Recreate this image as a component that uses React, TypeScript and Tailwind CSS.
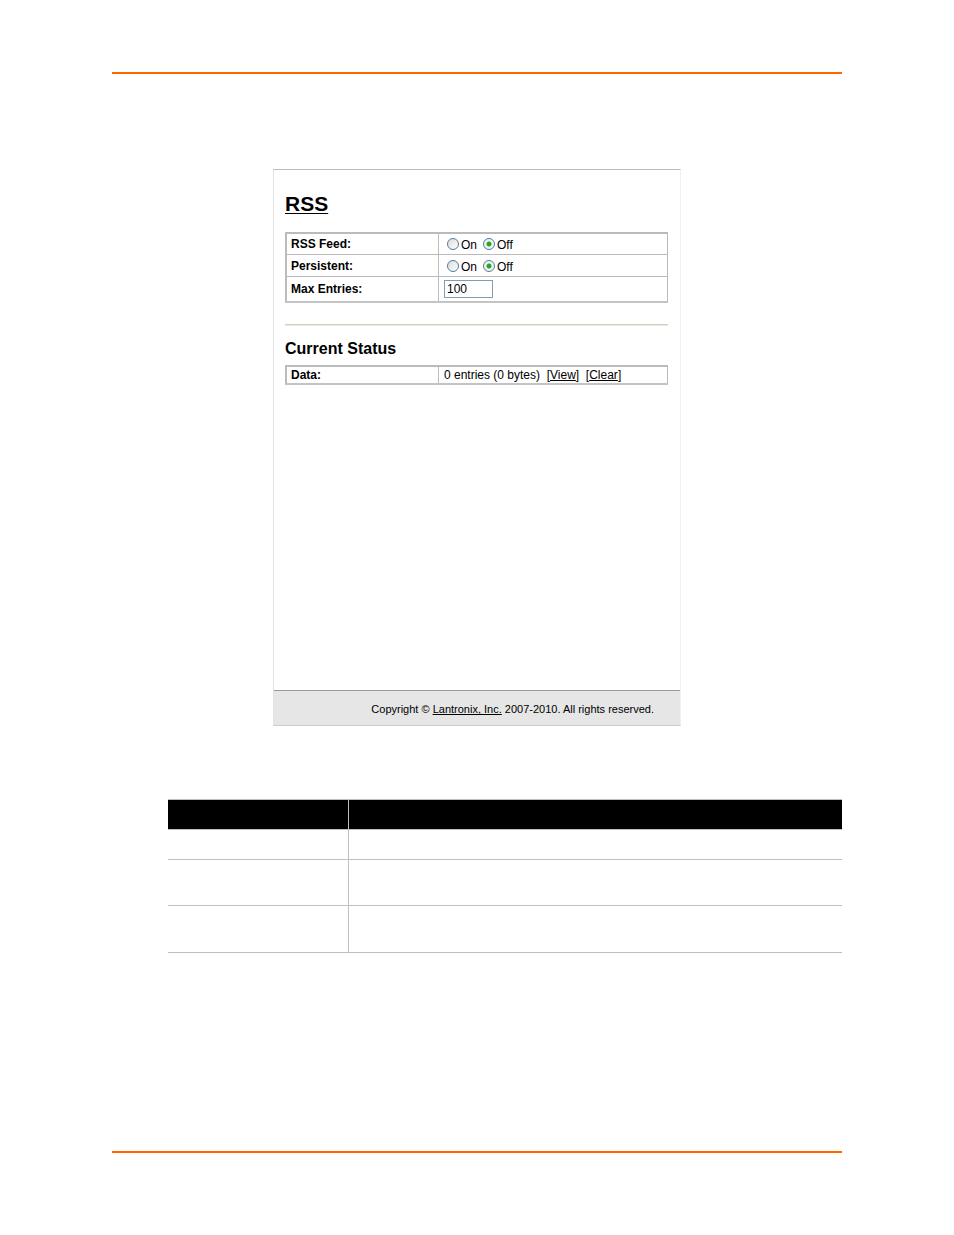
import { useState } from 'react';
import type { ReactNode } from 'react';

const manualRows = ['h-[30px]', 'h-[46px]', 'h-[47px]'];

interface RadioProps {
  name: string;
  label: string;
  checked: boolean;
  onChange: () => void;
}

function Radio({ name, label, checked, onChange }: RadioProps) {
  return (
    <label className="flex items-center gap-[2px]">
      <input
        type="radio"
        name={name}
        checked={checked}
        onChange={onChange}
        className="mb-[2px] h-3 w-3 appearance-none rounded-full border border-[#4f7ba3] bg-[linear-gradient(135deg,#dcdcd7,#ffffff)] checked:bg-[radial-gradient(circle,#22a722_0_2px,#f3f3f0_3px)]"
      />
      <span>{label}</span>
    </label>
  );
}

function OnOff({ name }: { name: string }) {
  const [on, setOn] = useState(false);

  return (
    <div role="radiogroup" aria-label={name} className="flex gap-[6px] pt-[2px] pl-[3px]">
      <Radio name={name} label="On" checked={on} onChange={() => setOn(true)} />
      <Radio name={name} label="Off" checked={!on} onChange={() => setOn(false)} />
    </div>
  );
}

function SettingsTable({ children }: { children: ReactNode }) {
  return (
    <table className="w-full table-fixed border-separate border-spacing-0 border-2 border-r border-[#bbbbbb] border-b-[#c4c4c4]">
      <tbody>{children}</tbody>
    </table>
  );
}

interface RowProps {
  label: ReactNode;
  height: string;
  children: ReactNode;
}

function Row({ label, height, children }: RowProps) {
  return (
    <tr className={`group ${height}`}>
      <th
        scope="row"
        className="w-[152px] border-t border-r border-[#bbbbbb] px-1 py-0 text-left font-bold group-first:border-t-0"
      >
        {label}
      </th>
      <td className="border-t border-[#bbbbbb] px-[5px] py-0 group-first:border-t-0">{children}</td>
    </tr>
  );
}

export default function App() {
  const [maxEntries, setMaxEntries] = useState('100');

  return (
    <div className="flex min-h-screen flex-col bg-white px-28 pt-[72px] pb-[82px] font-['Liberation_Sans',Arial,sans-serif] text-[12px] leading-4 text-black">
      <header className="border-t-2 border-[#ff6600]" />

      <main>
        {/* RSS page */}
        <section className="mx-auto mt-[95px] flex min-h-[557px] w-full max-w-[408px] flex-col border border-t-[#bbbbbb] border-r-[#f0f0f0] border-b-[#cccccc] border-l-[#e2e2e2]">
          <div className="flex-1 pt-[22px] pr-3 pl-[11px]">
            <h1 className="mb-4 text-[21px] leading-6 font-bold underline decoration-1 underline-offset-2">RSS</h1>

            <SettingsTable>
              <Row label="RSS Feed:" height="h-[20px]">
                <OnOff name="RSS Feed" />
              </Row>
              <Row label="Persistent:" height="h-[22px]">
                <OnOff name="Persistent" />
              </Row>
              <Row label={<label htmlFor="max-entries">Max Entries:</label>} height="h-[25px]">
                <input
                  id="max-entries"
                  type="text"
                  value={maxEntries}
                  onChange={(e) => setMaxEntries(e.target.value)}
                  className="block h-[18px] w-[49px] border border-[#7f9db9] px-[2px]"
                />
              </Row>
            </SettingsTable>

            <hr className="mt-[21px] h-[2px] border-t border-b border-t-[#d0cec8] border-b-[#ece9d8]" />

            <h2 className="mt-[13px] mb-[6px] text-[16px] leading-5 font-bold">Current Status</h2>

            <SettingsTable>
              <Row label="Data:" height="h-[16px]">
                0 entries (0 bytes)&nbsp; [<a href="#view" className="underline">View</a>]&nbsp; [
                <a href="#clear" className="underline">Clear</a>]
              </Row>
            </SettingsTable>
          </div>

          <footer className="border-t border-[#999999] bg-[#e6e6e6] pt-[10px] pr-[26px] pb-2 text-right text-[11px]">
            Copyright &copy;{' '}
            <a href="#lantronix" className="underline">Lantronix, Inc.</a> 2007-2010. All rights reserved.
          </footer>
        </section>

        {/* Field descriptions */}
        <table className="mt-[73px] ml-14 w-[calc(100%-56px)] table-fixed border-separate border-spacing-0">
          <thead>
            <tr className="h-[31px] bg-black">
              <th className="w-[181px] border-y border-r border-[#c0c0c0] p-0" />
              <th className="border-y border-[#c0c0c0] p-0" />
            </tr>
          </thead>
          <tbody>
            {manualRows.map((height) => (
              <tr key={height} className={height}>
                <td className="border-r border-b border-[#c0c0c0] p-0" />
                <td className="border-b border-[#c0c0c0] p-0" />
              </tr>
            ))}
          </tbody>
        </table>
      </main>

      <footer className="mt-auto border-t-2 border-[#ff6600]" />
    </div>
  );
}
